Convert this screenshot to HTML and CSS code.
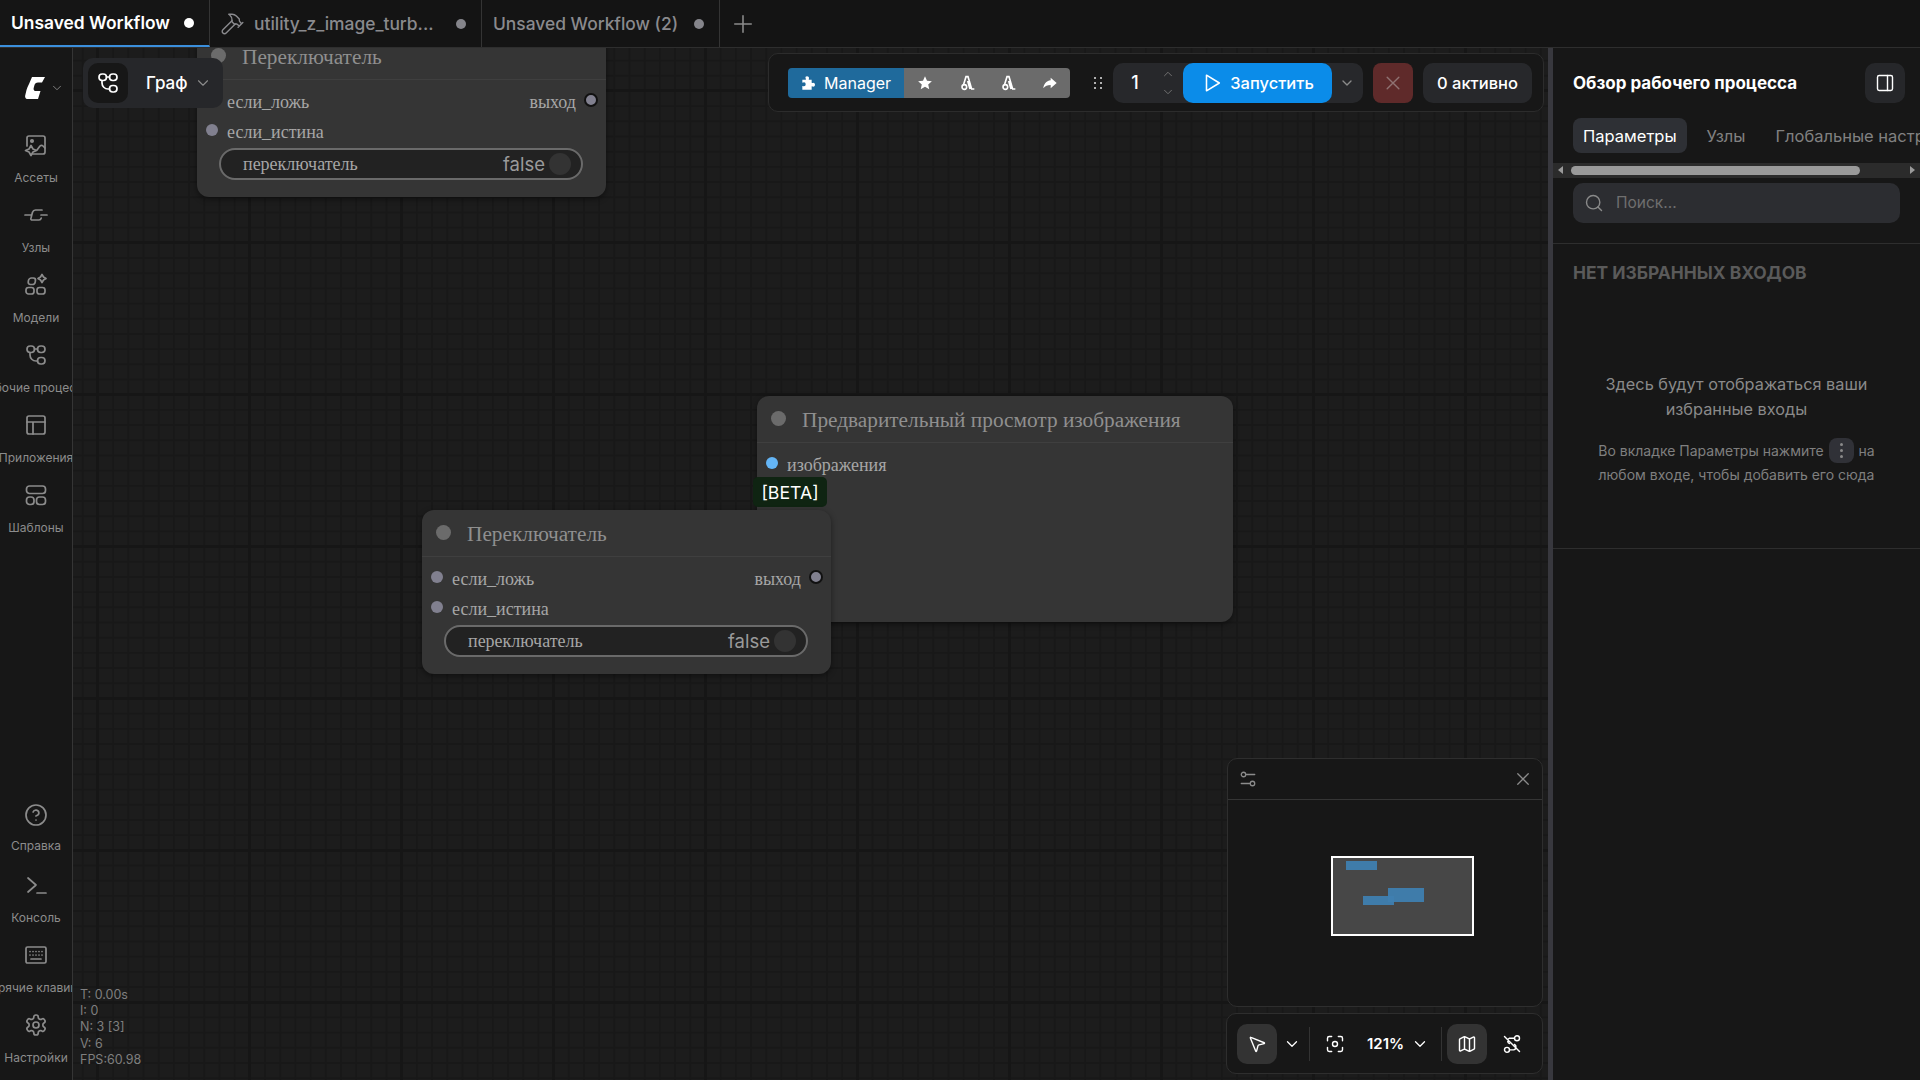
FILE: index.html
```html
<!DOCTYPE html>
<html lang="en">
<head>
    <meta charset="UTF-8">
    <meta name="viewport" content="width=device-width, initial-scale=1.0">
    <title>Unsaved Workflow</title>
    <link rel="stylesheet" href="styles.css">
</head>
<body>
    <svg class="sprite" aria-hidden="true">
        <symbol id="i-workflow" viewBox="0 0 24 24"><rect x="3" y="3" width="7.5" height="6.5" rx="3.2"/><rect x="13.5" y="3" width="7.5" height="6.5" rx="3.2"/><rect x="13.5" y="14.5" width="7.5" height="6.5" rx="3.2"/><path d="M6 9.5V12a6 6 0 0 0 6 6h1.5M10.5 6h3"/></symbol>
        <symbol id="i-chevron" viewBox="0 0 24 24"><path d="m6 9 6 6 6-6"/></symbol>
        <symbol id="i-assets" viewBox="0 0 24 24"><path d="M9 21h10a2 2 0 0 0 2-2V5a2 2 0 0 0-2-2H5a2 2 0 0 0-2 2v8"/><path d="m13 17 3-4c1-1 2-1 3 0l2 2"/><circle cx="8" cy="8" r="1.2" fill="currentColor"/><path d="M7 12.5 9 16l3.5 1.5L9 19l-2 3.5L5 19l-3.5-1.5L5 16z"/></symbol>
        <symbol id="i-nodes" viewBox="0 0 24 24"><path d="M1 12h6M17 12h6M18 7h-6.500c-1.500 0-2.500.8-3 2.200L7 15c-.5 1.300 0 2 1.500 2H15c1.500 0 2-1 2.300-2"/></symbol>
        <symbol id="i-models" viewBox="0 0 24 24"><rect x="4" y="5" width="7" height="6.5" rx="2.5" transform="skewX(-8) translate(1.5 0)"/><rect x="2" y="14.5" width="8" height="6.5" rx="2.5"/><rect x="13" y="14.5" width="8" height="6.5" rx="2.5"/><path d="m18 1.500 1.500 2.500 2.500 1.500-2.500 1.500-1.500 2.500-1.500-2.500L14 5.500 16.500 4z"/></symbol>
        <symbol id="i-apps" viewBox="0 0 24 24"><rect x="3" y="3" width="18" height="18" rx="2"/><path d="M3 9h18M9 9v12"/></symbol>
        <symbol id="i-templates" viewBox="0 0 24 24"><rect x="2.5" y="3" width="19" height="7.5" rx="3"/><rect x="2.5" y="14" width="7.5" height="7.5" rx="3"/><rect x="12.5" y="14" width="9" height="7.5" rx="3"/></symbol>
        <symbol id="i-help" viewBox="0 0 24 24"><circle cx="12" cy="12" r="10"/><path d="M9.1 9a3 3 0 0 1 5.800 1c0 2-3 3-3 3M12 17h.01"/></symbol>
        <symbol id="i-console" viewBox="0 0 24 24"><path d="m4 5 8 7-8 7M13 20h9"/></symbol>
        <symbol id="i-keyboard" viewBox="0 0 24 24"><rect x="2" y="4" width="20" height="16" rx="1.5"/><path d="M6 8.5h.01M9 8.5h.01M12 8.5h.01M15 8.5h.01M18 8.5h.01M6 12h.01M9 12h.01M12 12h.01M15 12h.01M18 12h.01M7 16h10"/></symbol>
        <symbol id="i-settings" viewBox="0 0 24 24"><path d="M12.22 2h-.44a2 2 0 0 0-2 2v.18a2 2 0 0 1-1 1.73l-.43.25a2 2 0 0 1-2 0l-.15-.08a2 2 0 0 0-2.73.73l-.22.38a2 2 0 0 0 .73 2.73l.15.1a2 2 0 0 1 1 1.72v.51a2 2 0 0 1-1 1.74l-.15.09a2 2 0 0 0-.73 2.73l.22.38a2 2 0 0 0 2.73.73l.15-.08a2 2 0 0 1 2 0l.43.25a2 2 0 0 1 1 1.73V20a2 2 0 0 0 2 2h.44a2 2 0 0 0 2-2v-.18a2 2 0 0 1 1-1.73l.43-.25a2 2 0 0 1 2 0l.15.08a2 2 0 0 0 2.73-.73l.22-.39a2 2 0 0 0-.73-2.73l-.15-.08a2 2 0 0 1-1-1.74v-.5a2 2 0 0 1 1-1.74l.15-.09a2 2 0 0 0 .73-2.73l-.22-.38a2 2 0 0 0-2.73-.73l-.15.08a2 2 0 0 1-2 0l-.43-.25a2 2 0 0 1-1-1.73V4a2 2 0 0 0-2-2z"/><circle cx="12" cy="12" r="3"/></symbol>
        <symbol id="i-hammer" viewBox="0 0 24 24"><path d="m15 12-8.400 8.400a2.100 2.100 0 1 1-3-3L12 9"/><path d="M17.64 15 22 10.64M20.91 11.7l-1.25-1.25c-.6-.6-.93-1.400-.93-2.250v-.86L16 4.600a5.560 5.560 0 0 0-3.940-1.640H9l.92.82A6.180 6.180 0 0 1 12 8.400v1.560l2 2h2.470l2.260 1.910"/></symbol>
        <symbol id="i-arch" viewBox="0 0 24 24"><g fill="none" stroke="#fff" stroke-width="2.4"><path d="M7 14 10.500 2.500h3L19 21h4M13 9l3.500 12"/><circle cx="8" cy="18" r="3.500"/></g></symbol>
    </svg>

    <div class="app">
        <!-- Workflow tabs -->
        <header class="tabbar">
            <div class="wf-tab active">
                <span class="wf-name">Unsaved Workflow</span>
                <span class="wf-dot"></span>
            </div>
            <div class="wf-tab tab-two">
                <svg class="ico hammer"><use href="#i-hammer"/></svg>
                <span class="wf-name">utility_z_image_turb...</span>
                <span class="wf-dot"></span>
            </div>
            <div class="wf-tab tab-three">
                <span class="wf-name">Unsaved Workflow (2)</span>
                <span class="wf-dot"></span>
            </div>
            <svg class="ico add-tab" viewBox="0 0 24 24"><path d="M12 3v18M3 12h18"/></svg>
        </header>

        <div class="main">
            <!-- Left sidebar -->
            <nav class="sidebar">
                <div class="logo-row">
                    <svg class="logo" viewBox="0 0 20 22"><path d="M7 0h13l-3 5.500h-4c-2 0-3 1-3.500 2.500l-.8 3c-.4 1.800.3 3 2.300 3h4.500L13 22H3c-2 0-3.300-1.200-2.800-3.500L1.500 13c.5-2 1.500-4 2.500-6z"/></svg>
                    <svg class="ico logo-chevron"><use href="#i-chevron"/></svg>
                </div>
                <div class="side-group">
                    <div class="side-item"><svg class="ico"><use href="#i-assets"/></svg><span>Ассеты</span></div>
                    <div class="side-item"><svg class="ico"><use href="#i-nodes"/></svg><span>Узлы</span></div>
                    <div class="side-item"><svg class="ico"><use href="#i-models"/></svg><span>Модели</span></div>
                    <div class="side-item"><svg class="ico"><use href="#i-workflow"/></svg><span>Рабочие процессы</span></div>
                    <div class="side-item"><svg class="ico"><use href="#i-apps"/></svg><span>Приложения</span></div>
                    <div class="side-item"><svg class="ico"><use href="#i-templates"/></svg><span>Шаблоны</span></div>
                </div>
                <div class="side-group side-bottom">
                    <div class="side-item"><svg class="ico"><use href="#i-help"/></svg><span>Справка</span></div>
                    <div class="side-item"><svg class="ico"><use href="#i-console"/></svg><span>Консоль</span></div>
                    <div class="side-item"><svg class="ico"><use href="#i-keyboard"/></svg><span>Горячие клавиши</span></div>
                    <div class="side-item"><svg class="ico"><use href="#i-settings"/></svg><span>Настройки</span></div>
                </div>
            </nav>

            <!-- Graph canvas -->
            <section class="canvas">
                <div class="node node-top">
                    <div class="node-title"><span class="node-dot"></span>Переключатель</div>
                    <div class="slot-row">
                        <span class="port"></span><span class="slot-label">если_ложь</span>
                        <span class="slot-out">выход</span><span class="port port-out"></span>
                    </div>
                    <div class="slot-row">
                        <span class="port"></span><span class="slot-label">если_истина</span>
                    </div>
                    <div class="widget"><span class="widget-label">переключатель</span><span class="widget-value">false</span><span class="knob"></span></div>
                </div>

                <div class="node node-preview">
                    <div class="node-title"><span class="node-dot"></span>Предварительный просмотр изображения</div>
                    <div class="slot-row">
                        <span class="port port-image"></span><span class="slot-label">изображения</span>
                    </div>
                </div>
                <div class="beta">[BETA]</div>

                <div class="node node-switch">
                    <div class="node-title"><span class="node-dot"></span>Переключатель</div>
                    <div class="slot-row">
                        <span class="port"></span><span class="slot-label">если_ложь</span>
                        <span class="slot-out">выход</span><span class="port port-out"></span>
                    </div>
                    <div class="slot-row">
                        <span class="port"></span><span class="slot-label">если_истина</span>
                    </div>
                    <div class="widget"><span class="widget-label">переключатель</span><span class="widget-value">false</span><span class="knob"></span></div>
                </div>

                <div class="mode-pill">
                    <span class="mode-icon"><svg class="ico"><use href="#i-workflow"/></svg></span>
                    <span class="mode-name">Граф</span>
                    <svg class="ico mode-chevron"><use href="#i-chevron"/></svg>
                </div>

                <div class="run-bar">
                    <div class="manager">
                        <div class="manager-main">
                            <svg class="solid" viewBox="0 0 24 24"><path d="M9 2c1.800 0 3 1.200 3 2.700 0 .8-.5 1.300-.5 1.800 0 .3.200.5.6.5H16v4.400c0 .4.200.6.500.6.5 0 1-.5 1.800-.5 1.500 0 2.700 1.200 2.700 3s-1.200 3-2.700 3c-.8 0-1.300-.5-1.800-.5-.3 0-.5.200-.5.600V22H2v-5c0-.4.300-.6.600-.6.500 0 1 .6 1.900.6C6 17 7 15.800 7 14s-1-3-2.500-3c-.9 0-1.400.6-1.900.6-.3 0-.6-.2-.6-.6V7h4.900c.4 0 .6-.2.600-.5 0-.5-.5-1-.5-1.800C6 3.200 7.200 2 9 2z"/></svg>
                            Manager
                        </div>
                        <div class="manager-tools">
                            <svg class="solid" viewBox="0 0 24 24"><path d="m12 2 3 6.800 7.300.7-5.500 4.800 1.600 7.200-6.400-3.800-6.400 3.800 1.600-7.200L1.700 9.500 9 8.800z"/></svg>
                            <svg class="solid"><use href="#i-arch"/></svg>
                            <svg class="solid"><use href="#i-arch"/></svg>
                            <svg class="solid" viewBox="0 0 24 24"><path d="M13 4l9 8-9 8v-5c-5 0-8 1.500-11 5 .5-6 4-11 11-12z"/></svg>
                        </div>
                    </div>
                    <svg class="grip" viewBox="0 0 12 16"><path d="M2 2h2v2H2zM8 2h2v2H8zM2 7h2v2H2zM8 7h2v2H8zM2 12h2v2H2zM8 12h2v2H8z"/></svg>
                    <div class="queue">
                        <span class="queue-count">1</span>
                        <span class="queue-arrows">
                            <svg class="ico"><use href="#i-chevron"/></svg>
                            <svg class="ico"><use href="#i-chevron"/></svg>
                        </span>
                        <button class="run-btn">
                            <svg class="ico" viewBox="0 0 24 24"><path d="M6 3.500v17L20 12z"/></svg>
                            Запустить
                        </button>
                        <svg class="ico run-more"><use href="#i-chevron"/></svg>
                    </div>
                    <button class="stop-btn"><svg class="ico" viewBox="0 0 24 24"><path d="M5 5l14 14M19 5 5 19"/></svg></button>
                    <div class="active-count">0 активно</div>
                </div>

                <div class="stats">
                    <div>T: 0.00s</div>
                    <div>I: 0</div>
                    <div>N: 3 [3]</div>
                    <div>V: 6</div>
                    <div>FPS:60.98</div>
                </div>

                <div class="minimap">
                    <div class="minimap-head">
                        <svg class="ico" viewBox="0 0 24 24"><circle cx="6" cy="6" r="3"/><path d="M10 6h11M3 18h11"/><circle cx="18" cy="18" r="3"/></svg>
                        <svg class="ico" viewBox="0 0 24 24"><path d="M5 5l14 14M19 5 5 19"/></svg>
                    </div>
                    <div class="minimap-body">
                        <div class="minimap-view">
                            <span class="mini-node mini-a"></span>
                            <span class="mini-node mini-b"></span>
                            <span class="mini-node mini-c"></span>
                        </div>
                    </div>
                </div>

                <div class="view-bar">
                    <span class="view-btn on"><svg class="ico" viewBox="0 0 24 24"><path d="M4.037 4.688a.495.495 0 0 1 .651-.651l16 6.500a.5.5 0 0 1-.063.947l-6.124 1.580a2 2 0 0 0-1.438 1.435l-1.579 6.126a.5.5 0 0 1-.947.063z"/></svg></span>
                    <svg class="ico view-chevron"><use href="#i-chevron"/></svg>
                    <span class="view-sep"></span>
                    <svg class="ico view-fit" viewBox="0 0 24 24"><path d="M3 8V5a2 2 0 0 1 2-2h3M16 3h3a2 2 0 0 1 2 2v3M21 16v3a2 2 0 0 1-2 2h-3M8 21H5a2 2 0 0 1-2-2v-3"/><circle cx="12" cy="12" r="3"/></svg>
                    <span class="zoom-value">121%</span>
                    <svg class="ico view-chevron"><use href="#i-chevron"/></svg>
                    <span class="view-sep sep-two"></span>
                    <span class="view-btn on"><svg class="ico" viewBox="0 0 24 24"><path d="M14.106 5.553a2 2 0 0 0 1.788 0l3.659-1.830A1 1 0 0 1 21 4.619v12.764a1 1 0 0 1-.553.894l-4.553 2.277a2 2 0 0 1-1.788 0l-4.212-2.106a2 2 0 0 0-1.788 0l-3.659 1.830A1 1 0 0 1 3 19.381V6.618a1 1 0 0 1 .553-.894l4.553-2.277a2 2 0 0 1 1.788 0zM15 5.764v15M9 3.236v15"/></svg></span>
                    <svg class="ico view-links" viewBox="0 0 24 24"><circle cx="18" cy="5" r="3"/><circle cx="6" cy="19" r="3"/><path d="M9 19h5a3.500 3.500 0 0 0 1-6.500M9 11.500A3.500 3.500 0 0 1 9 5h6M3 3l18 18"/></svg>
                </div>
            </section>

            <div class="splitter"></div>

            <!-- Right panel -->
            <aside class="panel">
                <div class="panel-head">
                    <h2>Обзор рабочего процесса</h2>
                    <span class="panel-toggle"><svg class="ico" viewBox="0 0 24 24"><rect x="3" y="3" width="18" height="18" rx="2"/><path d="M15 3v18"/></svg></span>
                </div>
                <div class="panel-tabs">
                    <span class="panel-tab active">Параметры</span>
                    <span class="panel-tab">Узлы</span>
                    <span class="panel-tab">Глобальные настройки</span>
                </div>
                <div class="hscroll">
                    <span class="arrow-left"></span>
                    <span class="hscroll-thumb"></span>
                    <span class="arrow-right"></span>
                </div>
                <div class="search-wrap">
                    <div class="search">
                        <svg class="ico" viewBox="0 0 24 24"><circle cx="11" cy="11" r="8"/><path d="m21 21-4.300-4.300"/></svg>
                        <span>Поиск...</span>
                    </div>
                </div>
                <div class="favorites">
                    <h3>НЕТ ИЗБРАННЫХ ВХОДОВ</h3>
                    <p class="fav-lead">Здесь будут отображаться ваши избранные входы</p>
                    <p class="fav-hint">Во вкладке Параметры нажмите <span class="kebab"><i></i><i></i><i></i></span> на любом входе, чтобы добавить его сюда</p>
                </div>
            </aside>
        </div>
    </div>
</body>
</html>
```

FILE: styles.css
```css
* {
    margin: 0;
    padding: 0;
    box-sizing: border-box;
}

html, body {
    height: 100%;
    overflow: hidden;
}

body {
    background: #171717;
    color: #fff;
    font-family: Inter, "Liberation Sans", sans-serif;
}

.sprite {
    position: absolute;
    width: 0;
    height: 0;
}

.ico {
    display: block;
    width: 24px;
    height: 24px;
    fill: none;
    stroke: currentColor;
    stroke-width: 1.7;
    stroke-linecap: round;
    stroke-linejoin: round;
    flex: none;
}

.solid {
    display: block;
    width: 16px;
    height: 16px;
    fill: #fff;
    flex: none;
}

.app {
    display: flex;
    flex-direction: column;
    height: 1080px;
}

/* Tabs */
.tabbar {
    display: flex;
    align-items: center;
    height: 48px;
    background: #141414;
    border-bottom: 1px solid #2e2e2e;
}

.wf-tab {
    display: flex;
    align-items: center;
    height: 47px;
    font-size: 17.4px;
    color: #8a8a8e;
    border-right: 1px solid #343434;
    font-weight: 500;
}

.wf-tab.active {
    width: 210px;
    padding-left: 11px;
    color: #fff;
    font-weight: 600;
    background: #151515;
    border-bottom: 2px solid #3b8fdc;
}

.tab-two {
    width: 272px;
    padding-left: 9px;
}

.tab-three {
    width: 238px;
    padding-left: 11px;
}

.wf-name {
    white-space: nowrap;
}

.wf-dot {
    width: 10px;
    height: 10px;
    border-radius: 50%;
    background: #85858b;
    margin-left: auto;
    margin-right: 15px;
}

.active .wf-dot {
    background: #fff;
    margin-right: 15px;
}

.hammer {
    width: 26px;
    height: 26px;
    margin-right: 9px;
    stroke-width: 1.3;
}

.add-tab {
    width: 22px;
    height: 22px;
    margin-left: 12px;
    color: #8b8b8b;
}

.main {
    display: flex;
    flex: 1;
    min-height: 0;
}

/* Sidebar */
.sidebar {
    width: 73px;
    flex: none;
    display: flex;
    flex-direction: column;
    background: #171717;
    border-right: 1px solid #353535;
    overflow: hidden;
}

.logo-row {
    height: 72px;
    display: flex;
    align-items: center;
    padding: 8px 0 0 25px;
    gap: 5px;
}

.logo {
    width: 20px;
    height: 22px;
    fill: #fff;
    flex: none;
}

.logo-chevron {
    width: 14px;
    height: 14px;
    color: #8b8b8b;
    stroke-width: 1.5;
}

.side-bottom {
    margin-top: auto;
    padding-bottom: 10px;
}

.side-item {
    height: 70px;
    display: flex;
    flex-direction: column;
    align-items: center;
    padding-top: 13px;
    color: #8c8c8c;
    overflow: hidden;
}

.side-item span {
    margin-top: 12px;
    font-size: 12px;
    line-height: 17px;
    white-space: nowrap;
}

.side-bottom .side-item:first-child span {
    margin-top: 10px;
}

/* Canvas */
.canvas {
    position: relative;
    flex: 1;
    min-width: 0;
    overflow: hidden;
    background-color: #1c1c1c;
    background-image:
        linear-gradient(#161616 3px, transparent 3px),
        linear-gradient(90deg, #161616 3px, transparent 3px),
        linear-gradient(#181818 2px, transparent 2px),
        linear-gradient(90deg, #181818 2px, transparent 2px);
    background-size: 152px 152px, 152px 152px, 15.2px 15.2px, 15.2px 15.2px;
    background-position: 23px 41px, 23px 41px, 24px 42px, 24px 42px;
}

.node {
    position: absolute;
    background: #353535;
    border-radius: 12px;
    box-shadow: 0 2px 6px rgba(0, 0, 0, 0.45);
    font-family: "Liberation Serif", serif;
    color: #a6a6a6;
}

.node-top {
    left: 124px;
    top: -15px;
    width: 409px;
    height: 164px;
}

.node-switch {
    left: 349px;
    top: 462px;
    width: 409px;
    height: 164px;
}

.node-preview {
    left: 684px;
    top: 348px;
    width: 476px;
    height: 226px;
}

.node-title {
    display: flex;
    align-items: center;
    height: 47px;
    padding: 2px 0 0 14px;
    font-size: 21.3px;
    color: #8f8f8f;
    border-bottom: 1px solid #3f3f3f;
    white-space: nowrap;
}

.node-dot {
    width: 15px;
    height: 15px;
    border-radius: 50%;
    background: #6b6b6b;
    margin: -3px 16px 0 0;
}

.slot-row {
    display: flex;
    align-items: center;
    height: 30px;
    padding-left: 9px;
    font-size: 18px;
}

.node-title + .slot-row {
    margin-top: 6px;
}

.slot-label {
    padding-top: 3px;
    margin-left: 9px;
}

.port {
    width: 12px;
    height: 12px;
    border-radius: 50%;
    background: #81808f;
    margin-top: -2px;
}

.port-image {
    background: #64b5f6;
}

.slot-out {
    margin-left: auto;
    padding-top: 3px;
    margin-right: 8px;
}

.port-out {
    width: 14px;
    height: 14px;
    border: 2px solid #111;
    margin-right: 8px;
}

.widget {
    display: flex;
    align-items: center;
    height: 32px;
    margin: 2px 23px 0 22px;
    padding: 0 10px 0 22px;
    background: #222;
    border: 2px solid #6a6a6a;
    border-radius: 16px;
}

.widget-label {
    font-size: 18px;
    padding-top: 1px;
}

.widget-value {
    margin-left: auto;
    margin-right: 4px;
    font-family: Inter, "Liberation Sans", sans-serif;
    font-size: 18.5px;
    color: #9a9a9a;
}

.knob {
    width: 22px;
    height: 22px;
    border-radius: 50%;
    background: #333;
}

.beta {
    position: absolute;
    left: 680px;
    top: 429px;
    width: 74px;
    height: 30px;
    display: flex;
    align-items: center;
    justify-content: center;
    background: #0f2412;
    border-radius: 5px;
    font-size: 17.7px;
    color: #fff;
}

.mode-pill {
    position: absolute;
    left: 10px;
    top: 10px;
    width: 140px;
    height: 50px;
    display: flex;
    align-items: center;
    padding-left: 5px;
    background: #26272a;
    border-radius: 10px;
}

.mode-icon {
    width: 40px;
    height: 40px;
    display: flex;
    align-items: center;
    justify-content: center;
    background: #171717;
    border-radius: 10px;
}

.mode-name {
    margin-left: 18px;
    font-size: 17px;
    font-weight: 500;
}

.mode-chevron {
    width: 18px;
    height: 18px;
    margin-left: 6px;
    color: #8b8b8b;
    stroke-width: 1.5;
}

/* Run toolbar */
.run-bar {
    position: absolute;
    left: 695px;
    top: 5px;
    width: 776px;
    height: 59px;
    display: flex;
    align-items: center;
    padding-left: 19px;
    background: #171717;
    border: 1px solid #2c2c2c;
    border-radius: 10px;
}

.manager {
    display: flex;
    width: 282px;
    height: 30px;
    border-radius: 4px;
    overflow: hidden;
    font-size: 16px;
}

.manager-main {
    display: flex;
    align-items: center;
    gap: 7px;
    width: 116px;
    padding-left: 13px;
    background: #1f6a9c;
}

.manager-tools {
    flex: 1;
    display: flex;
    align-items: center;
    justify-content: space-between;
    padding: 0 12px 0 13px;
    background: #6b6b6b;
}

.grip {
    width: 12px;
    height: 16px;
    margin-left: 22px;
    fill: #b0b0b0;
}

.queue {
    display: flex;
    align-items: center;
    width: 250px;
    height: 40px;
    margin-left: 9px;
    background: #27282b;
    border-radius: 10px;
}

.queue-count {
    width: 44px;
    text-align: center;
    font-size: 18px;
    font-weight: 500;
}

.queue-arrows {
    display: flex;
    flex-direction: column;
    gap: 4px;
    width: 26px;
    color: #707070;
}

.queue-arrows .ico {
    width: 14px;
    height: 14px;
    margin-left: 4px;
}

.queue-arrows .ico:first-child {
    transform: rotate(180deg);
}

.run-btn {
    display: flex;
    align-items: center;
    justify-content: center;
    gap: 7px;
    width: 149px;
    height: 40px;
    border: none;
    border-radius: 10px;
    background: #0b8ce9;
    color: #fff;
    font-family: inherit;
    font-size: 16.5px;
    font-weight: 500;
}

.run-btn .ico {
    width: 22px;
    height: 22px;
}

.run-more {
    width: 16px;
    height: 16px;
    margin-left: 7px;
    color: #8b8b8b;
    stroke-width: 2;
}

.stop-btn {
    display: flex;
    align-items: center;
    justify-content: center;
    width: 40px;
    height: 40px;
    margin-left: 10px;
    border: none;
    border-radius: 8px;
    background: #5f2a2a;
    color: #8f7272;
}

.stop-btn .ico {
    width: 20px;
    height: 20px;
}

.active-count {
    display: flex;
    align-items: center;
    justify-content: center;
    width: 109px;
    height: 40px;
    margin-left: 10px;
    background: #27282b;
    border-radius: 10px;
    font-size: 16.5px;
    font-weight: 500;
}

.stats {
    position: absolute;
    left: 7px;
    bottom: 12px;
    font-size: 12.5px;
    line-height: 16.2px;
    color: #7f7f7f;
}

/* Minimap */
.minimap {
    position: absolute;
    left: 1154px;
    top: 710px;
    width: 316px;
    height: 249px;
    background: #171717;
    border: 1px solid #2e2e2e;
    border-radius: 10px;
}

.minimap-head {
    display: flex;
    align-items: center;
    justify-content: space-between;
    height: 41px;
    padding: 0 10px 0 11px;
    color: #8b8b8b;
    border-bottom: 1px solid #353535;
}

.minimap-head .ico {
    width: 18px;
    height: 18px;
}

.minimap-body {
    position: relative;
    height: 206px;
}

.minimap-view {
    position: absolute;
    left: 103px;
    top: 56px;
    width: 143px;
    height: 80px;
    background: #474747;
    border: 2px solid #fff;
}

.mini-node {
    position: absolute;
    background: #3f7fb0;
    opacity: 0.95;
}

.mini-a {
    left: 13px;
    top: 3px;
    width: 31px;
    height: 9px;
}

.mini-b {
    left: 55px;
    top: 30px;
    width: 36px;
    height: 14px;
}

.mini-c {
    left: 30px;
    top: 38px;
    width: 31px;
    height: 9px;
}

.view-bar {
    position: absolute;
    left: 1153px;
    top: 965px;
    width: 317px;
    height: 61px;
    display: flex;
    align-items: center;
    padding-left: 10px;
    background: #171717;
    border: 1px solid #2e2e2e;
    border-radius: 10px;
}

.view-btn {
    display: flex;
    align-items: center;
    justify-content: center;
    width: 40px;
    height: 40px;
    background: #333;
    border-radius: 10px;
    color: #fff;
}

.view-btn .ico {
    width: 20px;
    height: 20px;
}

.view-chevron {
    width: 18px;
    height: 18px;
    margin-left: 6px;
}

.view-sep {
    width: 1px;
    height: 34px;
    margin-left: 8px;
    background: #333;
}

.view-fit {
    width: 20px;
    height: 20px;
    margin-left: 15px;
}

.zoom-value {
    margin-left: 22px;
    margin-right: 1px;
    font-size: 15px;
    font-weight: 600;
}

.sep-two {
    margin-left: 12px;
    margin-right: 5px;
}

.view-links {
    width: 20px;
    height: 20px;
    margin-left: 15px;
}

.splitter {
    width: 5px;
    flex: none;
    background: #38383e;
}

/* Right panel */
.panel {
    width: 367px;
    flex: none;
    background: #171717;
    overflow: hidden;
}

.panel-head {
    display: flex;
    align-items: center;
    justify-content: space-between;
    height: 70px;
    padding: 0 15px 0 20px;
}

.panel-head h2 {
    font-size: 17px;
    font-weight: 700;
}

.panel-toggle {
    display: flex;
    align-items: center;
    justify-content: center;
    width: 40px;
    height: 40px;
    background: #26272a;
    border-radius: 10px;
}

.panel-toggle .ico {
    width: 20px;
    height: 20px;
}

.panel-tabs {
    display: flex;
    align-items: center;
    height: 45px;
    padding-left: 20px;
    white-space: nowrap;
    font-size: 16.5px;
    color: #818181;
}

.panel-tab {
    padding: 8px 10px;
    height: 35px;
    margin-right: 10px;
    border-radius: 8px;
    line-height: 20px;
    margin-bottom: 10px;
}

.panel-tab.active {
    background: #2e3035;
    color: #fff;
}

.hscroll {
    position: relative;
    height: 15px;
    background: #2b2b2b;
}

.hscroll-thumb {
    position: absolute;
    left: 18px;
    top: 3px;
    width: 289px;
    height: 9px;
    background: #9a9a9a;
    border-radius: 5px;
}

.arrow-left,
.arrow-right {
    position: absolute;
    top: 3px;
    border-top: 4px solid transparent;
    border-bottom: 4px solid transparent;
}

.arrow-left {
    left: 5px;
    border-right: 5px solid #9a9a9a;
}

.arrow-right {
    right: 5px;
    border-left: 5px solid #9a9a9a;
}

.search-wrap {
    height: 66px;
    padding: 5px 20px 0;
    border-bottom: 1px solid #2e2e2e;
}

.search {
    display: flex;
    align-items: center;
    gap: 12px;
    width: 327px;
    height: 40px;
    padding-left: 11px;
    background: #2c2d31;
    border-radius: 10px;
    color: #6f6f6f;
    font-size: 15.5px;
}

.search span {
    margin-top: -2px;
}

.search .ico {
    width: 20px;
    height: 20px;
    color: #8a8a8a;
}

.favorites {
    height: 305px;
    padding: 19px 20px 0;
    border-bottom: 1px solid #2e2e2e;
    text-align: center;
}

.favorites h3 {
    text-align: left;
    font-size: 17.4px;
    font-weight: 700;
    line-height: 20px;
    color: #5a5a5a;
}

.fav-lead {
    margin: 89px 10px 0;
    font-size: 16.3px;
    line-height: 25px;
    color: #8a8a8a;
}

.fav-hint {
    margin-top: 17px;
    font-size: 14px;
    line-height: 23px;
    color: #7f7f7f;
}

.kebab {
    display: inline-flex;
    flex-direction: column;
    align-items: center;
    justify-content: center;
    gap: 3px;
    width: 25px;
    height: 25px;
    margin: -4px 1px 0;
    vertical-align: middle;
    background: #303137;
    border-radius: 8px;
}

.kebab i {
    width: 3px;
    height: 3px;
    border-radius: 50%;
    background: #8a8a8a;
}
```
